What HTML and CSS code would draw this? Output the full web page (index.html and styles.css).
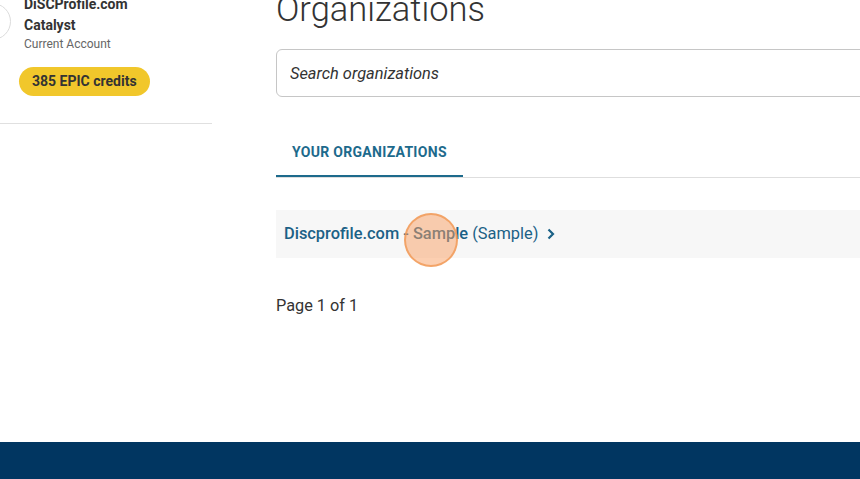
FILE: index.html
```html
<html>
<head>
    <link rel="stylesheet" href="styles.css">
</head>
<body>
    <div class="layout">
        <div class="sidebar">
            <div class="profile">
                <div class="avatar"></div>
                <div class="account">
                    <div class="account-name">DiSCProfile.com</div>
                    <div class="account-name">Catalyst</div>
                    <div class="account-label">Current Account</div>
                </div>
            </div>
            <span class="credits">385 EPIC credits</span>
        </div>

        <div class="main">
            <h1 class="title">Organizations</h1>
            <input class="search" type="text" placeholder="Search organizations">

            <div class="tabs">
                <div class="tab active">Your Organizations</div>
            </div>

            <div class="org-row">
                <a class="org-link" href="#"><span class="org-name">Discprofile.com - Sample</span> (Sample)</a>
                <svg class="chevron" width="10" height="14" viewBox="0 0 10 14">
                    <path d="M2.5 2.5 L7 7 L2.5 11.5" fill="none" stroke="#1b6186" stroke-width="2.2"/>
                </svg>
                <span class="click-mark"></span>
            </div>

            <p class="pager">Page 1 of 1</p>
        </div>
    </div>

    <div class="footer"></div>
</body>
</html>
```

FILE: styles.css
```css
body {
    margin: 0;
    overflow: hidden;
    background: #fff;
    font-family: Roboto, "Liberation Sans", sans-serif;
    color: #333;
}
.layout {
    display: flex;
    align-items: flex-start;
    margin-top: -11px;
}
.sidebar {
    width: 212px;
    flex-shrink: 0;
    padding-top: 5px;
    padding-bottom: 27px;
    border-bottom: 1px solid #e0e0e0;
}
.profile {
    display: flex;
    align-items: flex-start;
}
.avatar {
    width: 35px;
    height: 35px;
    margin-left: -26px;
    margin-top: 9px;
    margin-right: 13px;
    border: 1px solid #dcdcdc;
    border-radius: 50%;
    flex-shrink: 0;
}
.account-name {
    font-size: 14px;
    font-weight: 700;
    line-height: 21px;
    color: #333;
}
.account-label {
    font-size: 12px;
    line-height: 17px;
    color: #666;
}
.credits {
    display: inline-block;
    margin-top: 14px;
    margin-left: 19px;
    padding: 0 13px;
    height: 29px;
    line-height: 29px;
    border-radius: 15px;
    background: #f1c72b;
    font-size: 14px;
    font-weight: 700;
    color: #333;
}
.main {
    width: 700px;
    flex-shrink: 0;
    margin-left: 64px;
}
.title {
    margin: 0 0 20px;
    font-size: 34.5px;
    font-weight: 300;
    line-height: 40px;
    color: #333;
}
.search {
    display: block;
    width: 100%;
    height: 48px;
    box-sizing: border-box;
    padding: 0 13px;
    border: 1px solid #c6c6c6;
    border-radius: 6px;
    font-family: Roboto, "Liberation Sans", sans-serif;
    font-size: 16.4px;
    font-style: italic;
    color: #333;
}
.search::placeholder {
    color: #333;
}
.tabs {
    display: flex;
    margin-top: 32px;
    border-bottom: 1px solid #dedede;
}
.tab {
    padding: 0 16px;
    height: 46px;
    line-height: 46px;
    font-size: 14px;
    font-weight: 700;
    letter-spacing: 0.3px;
    text-transform: uppercase;
    color: #1d6a8c;
}
.tab.active {
    border-bottom: 2px solid #1d6a8c;
}
.org-row {
    position: relative;
    display: flex;
    align-items: center;
    gap: 8px;
    margin-top: 32px;
    height: 48px;
    padding-left: 8px;
    background: #f7f7f7;
}
.org-link {
    font-size: 16.4px;
    line-height: 20px;
    color: #1b6186;
    text-decoration: none;
}
.org-name {
    font-weight: 500;
}
.chevron {
    margin-top: 0;
}
.click-mark {
    position: absolute;
    left: 128px;
    top: 3px;
    width: 50px;
    height: 50px;
    border: 2px solid rgba(240, 150, 80, 0.75);
    border-radius: 50%;
    background: rgba(250, 160, 100, 0.5);
}
.pager {
    margin: 36px 0 0;
    font-size: 16.3px;
    line-height: 24px;
    color: #333;
}
.footer {
    margin-top: 124px;
    height: 200px;
    background: #013661;
}
```
